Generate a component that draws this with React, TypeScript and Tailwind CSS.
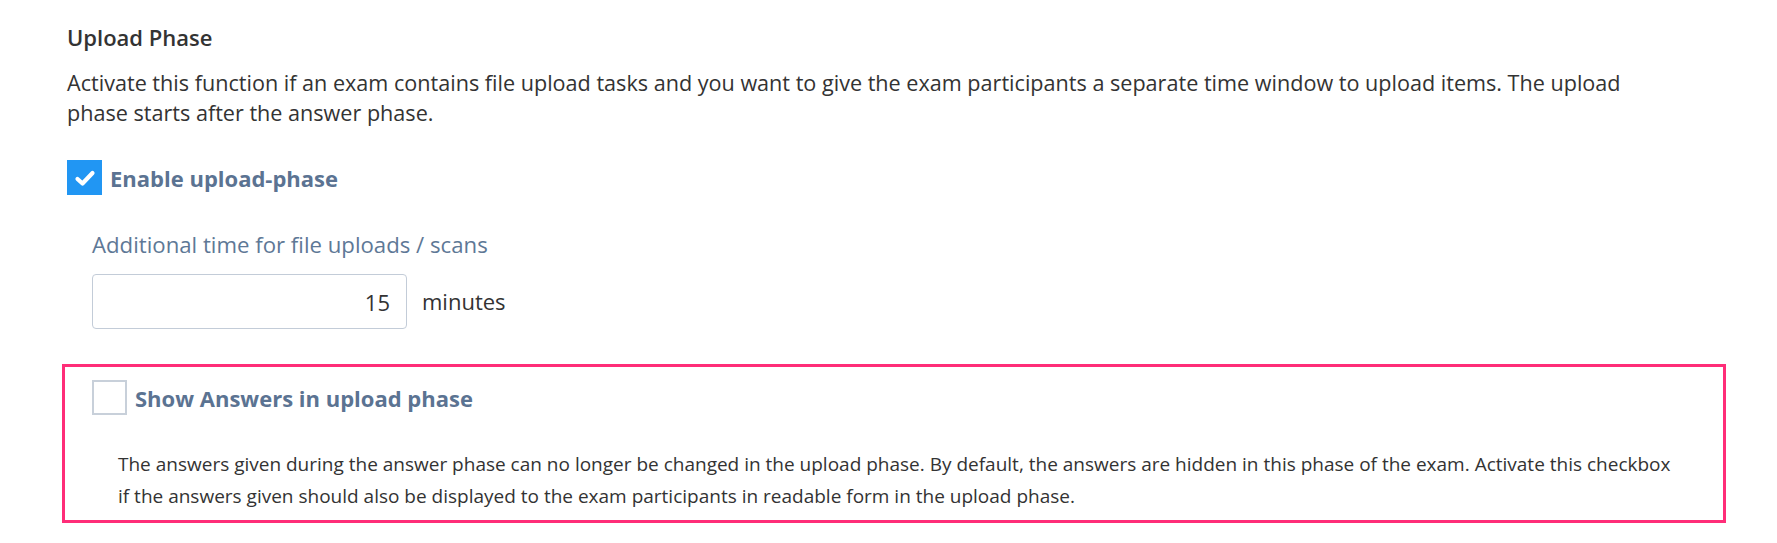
import React, { useState } from 'react';

interface CheckboxProps {
  checked: boolean;
  onChange: (value: boolean) => void;
}

function Checkbox({ checked, onChange }: CheckboxProps) {
  return (
    <button
      type="button"
      role="checkbox"
      aria-checked={checked}
      onClick={() => onChange(!checked)}
      className={
        checked
          ? 'w-[35px] h-[35px] shrink-0 bg-[#2196f3] flex items-center justify-center'
          : 'w-[35px] h-[35px] shrink-0 bg-white border-2 border-[#c8d0da] flex items-center justify-center'
      }
    >
      {checked && (
        <svg viewBox="0 0 24 24" className="w-[24px] h-[24px]" fill="none">
          <path d="M4.5 13l5 4.5 10-10.5" stroke="white" strokeWidth="4.2" strokeLinecap="round" strokeLinejoin="round" />
        </svg>
      )}
    </button>
  );
}

export default function App() {
  const [uploadPhase, setUploadPhase] = useState(true);
  const [showAnswers, setShowAnswers] = useState(false);
  const [minutes, setMinutes] = useState('15');

  return (
    <div className="min-h-screen bg-white font-['Open_Sans',sans-serif] text-[#333333]">
      <div className="pl-[67px] pr-[100px] pt-[22px]">
        {/* Section heading + intro */}
        <h3 className="text-[22px] leading-[30px] font-semibold">Upload Phase</h3>
        <p className="mt-[16px] text-[21.6px] leading-[30px]">
          Activate this function if an exam contains file upload tasks and you want to give the exam participants a
          separate time window to upload items. The upload phase starts after the answer phase.
        </p>

        <label className="mt-[32px] flex items-center gap-[8px] cursor-pointer">
          <Checkbox checked={uploadPhase} onChange={setUploadPhase} />
          <span className="text-[22px] leading-[30px] font-bold text-[#5b7392]">Enable upload-phase</span>
        </label>

        {/* Extra time for uploads */}
        <div className="pl-[25px] mt-[35px]">
          <div className="text-[22.2px] leading-[30px] text-[#5e7896]">Additional time for file uploads / scans</div>
          <div className="mt-[14px] flex items-center gap-[15px]">
            <input
              value={minutes}
              onChange={(e) => setMinutes(e.target.value)}
              className="w-[315px] h-[55px] border border-[#c3ccd8] rounded-[4px] px-[16px] text-right text-[22px] text-[#333333] outline-none"
            />
            <span className="text-[22px]">minutes</span>
          </div>
        </div>

        {/* Highlighted option */}
        <div className="-ml-[5px] -mr-[49px] mt-[35px] border-[3px] border-[#ff2d78] pt-[13px] pb-[8px]">
          <label className="pl-[27px] flex items-center gap-[8px] cursor-pointer">
            <Checkbox checked={showAnswers} onChange={setShowAnswers} />
            <span className="text-[22px] leading-[30px] font-bold text-[#5b7392]">Show Answers in upload phase</span>
          </label>
          <p className="mt-[33px] pl-[53px] pr-[40px] text-[19px] leading-[32px]">
            The answers given during the answer phase can no longer be changed in the upload phase. By default, the
            answers are hidden in this phase of the exam. Activate this checkbox if the answers given should also be
            displayed to the exam participants in readable form in the upload phase.
          </p>
        </div>
      </div>
    </div>
  );
}
